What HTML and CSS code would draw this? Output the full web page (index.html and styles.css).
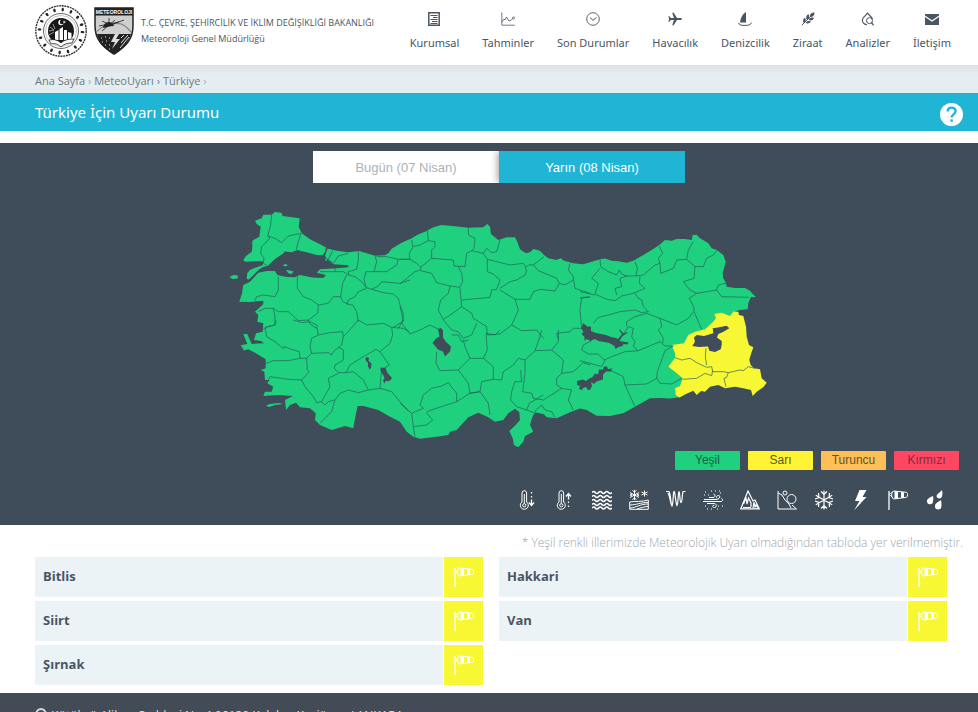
FILE: index.html
```html
<!DOCTYPE html>
<html lang="tr">
<head>
    <meta charset="UTF-8">
    <meta name="viewport" content="width=device-width, initial-scale=1.0">
    <title>MeteoUyarı - Meteoroloji Genel Müdürlüğü</title>
    <link rel="stylesheet" href="styles.css">
</head>
<body>
    <!-- shared icons -->
    <svg class="defs" width="0" height="0" aria-hidden="true">
        <symbol id="windsock" viewBox="0 0 20 20">
            <path d="M1 1v19" fill="none" stroke="currentColor" stroke-width="1.300"/>
            <path d="M1 4.500L5 1.500M1 4L5 8" fill="none" stroke="currentColor" stroke-width=".7"/>
            <path d="M5.500 1l13 1.300c1.600 1 1.600 4 0 5L5.500 9C3 7 3 3 5.500 1z" fill="none" stroke="currentColor" stroke-width="1"/>
            <path d="M6.500 1l3.500.4v7.200l-3.500.4zM13 2l3 .3v5.400l-3 .3z" fill="currentColor"/>
        </symbol>
    </svg>

    <header class="header">
        <a class="brand" href="#">
            <svg class="seal" viewBox="0 0 52 54" aria-hidden="true">
                <circle cx="26" cy="27" r="25.200" fill="#fff" stroke="#333" stroke-width="1.400" stroke-dasharray="2 .7"/>
                <circle cx="26" cy="27" r="21.500" fill="none" stroke="#222" stroke-width="2.600" stroke-dasharray="2.300 6.143"/>
                <circle cx="26" cy="27" r="21.500" fill="none" stroke="#222" stroke-width="3.800" stroke-dasharray=".9 7.543" stroke-dashoffset="-.7"/>
                <circle cx="26" cy="27" r="17.500" fill="none" stroke="#444" stroke-width=".8"/>
                <circle cx="26" cy="27" r="15.500" fill="none" stroke="#888" stroke-width=".5"/>
                <circle cx="26" cy="27" r="13" fill="#181818"/>
                <circle cx="26" cy="18.500" r="2.700" fill="#fff"/>
                <circle cx="27" cy="18" r="2.200" fill="#181818"/>
                <path d="M28 18h2.500M29.200 16.800v2.400" stroke="#fff" stroke-width=".8"/>
                <path d="M14 27l5-1M15 23l4 3M18 20l2 5M14 31l5-3" stroke="#ccc" stroke-width=".7"/>
                <path d="M20 28l3.500-2v10H20zM24.500 25l3.500-2v13h-3.500zM29 26h3v10h-3zM33 28l3.500 1v7H33z" fill="#fff"/>
                <path d="M14 36c5-1 9 0 12 3 3-3 7-4 13-4l-2 4c-5 0-8 1-11 4-3-3-6-4-10-3z" fill="#fff" stroke="#222" stroke-width=".8"/>
            </svg>
            <svg class="shield" viewBox="0 0 40 48" aria-hidden="true">
                <path d="M1 1h38v18c0 12-6 20-19 28C7 39 1 31 1 19z" fill="#cfcfcf" stroke="#222" stroke-width="1.500"/>
                <path d="M1 1h38v7.500H1z" fill="#222"/>
                <text x="20" y="7" class="shield-text" text-anchor="middle">METEOROLOJI</text>
                <path d="M2 25c6-5 11-9 17-8 6-2 12 0 18 8" fill="none" stroke="#888" stroke-width="1.300"/>
                <path d="M10 20c1-4 6-6 9-2z" fill="#222" stroke="#222" stroke-width="1.500"/>
                <path d="M5 19l20-4M8 24l13-11M8 14l11 5M15 11v7M19 17l11-4" stroke="#222" stroke-width=".8"/>
                <path d="M3 27h34c-3 9-8 15-17 20C10 42 5 36 3 27z" fill="#222"/>
                <path d="M21 27l-4 8h4l-3 7 8-10h-4l3-5z" fill="#ddd"/>
                <path d="M27 31l3-3M27 36l7-8M26 41l9-11M7 31h1M11 30h1M15 31h1M8 35h1M12 34h1M11 38h1M15 38h1M15 42h1" stroke="#ddd" stroke-width="1"/>
            </svg>
            <span class="brand-name">T.C. ÇEVRE, ŞEHİRCİLİK VE İKLİM DEĞİŞİKLİĞİ BAKANLIĞI<br>Meteoroloji Genel Müdürlüğü</span>
        </a>
        <nav class="menu">
            <a href="#">
                <svg viewBox="0 0 14 14" aria-hidden="true"><path d="M1.800.8h10.400v12.400H1.800z" fill="none" stroke="currentColor" stroke-width="1.500"/><path d="M3.500 3.500h7M6 5.500h4.500M3.500 7.500h7M5 9.500h5.500M3.500 11.500h7" stroke="currentColor" stroke-width="1"/></svg>
                <span>Kurumsal</span>
            </a>
            <a href="#">
                <svg viewBox="0 0 14 14" aria-hidden="true"><path d="M.8.500v12.700h13" fill="none" stroke="currentColor" stroke-width=".8"/><path d="M1 10l2-3 1 1 1.500-3L8 9l2.500-1L12 6" fill="none" stroke="currentColor" stroke-width=".8"/><circle cx="12.600" cy="5.800" r="1" fill="none" stroke="currentColor" stroke-width=".7"/></svg>
                <span>Tahminler</span>
            </a>
            <a href="#">
                <svg viewBox="0 0 14 14" aria-hidden="true"><circle cx="7" cy="7" r="6.300" fill="none" stroke="currentColor" stroke-width=".9"/><path d="M4 5.500l3 2.800 3.500-2.800" fill="none" stroke="currentColor" stroke-width="1"/></svg>
                <span>Son Durumlar</span>
            </a>
            <a href="#">
                <svg viewBox="0 0 14 14" aria-hidden="true"><path d="M14 7c0-.7-1-1.100-2-1.100H9L5.700.700H4.200L6 5.900H2.800L1.400 4.300H.4L1.100 7l-.7 2.700h1l1.400-1.600H6L4.200 13.300h1.500L9 8.100h3c1 0 2-.4 2-1.100z" fill="currentColor"/></svg>
                <span>Havacılık</span>
            </a>
            <a href="#">
                <svg viewBox="0 0 14 14" aria-hidden="true"><path d="M8 0v10.500H2C2.500 6 4.500 2 8 0z" fill="currentColor"/><path d="M.5 11c1 2.400 3.500 2.400 6.500 2.400s5.500-.2 6.500-2.800" fill="none" stroke="currentColor" stroke-width="1"/></svg>
                <span>Denizcilik</span>
            </a>
            <a href="#">
                <svg viewBox="0 0 14 14" aria-hidden="true"><path d="M.8 13.200L12 2" stroke="currentColor" stroke-width="1"/><path d="M13.500.5c-3 0-5 1.500-4.500 4.500 3 .2 4.500-1.500 4.500-4.500zM7.500 2C5 3.500 4.500 6 6 8 8.500 6.500 8.500 4.500 7.500 2zM4 5.500c-2 1.500-2.500 3.500-1.300 5.500C5 9.500 5.200 8 4 5.500zM13 6c-1 2.500-3.500 3-5.500 2C9 5.500 10.500 5 13 6zM10 9.500c-1 2-3.500 2.500-5.500 1.500C6 8.700 8 8.500 10 9.500z" fill="currentColor"/></svg>
                <span>Ziraat</span>
            </a>
            <a href="#">
                <svg viewBox="0 0 14 14" aria-hidden="true"><path d="M6 12.700C2.500 12.500.8 10 1.500 7.300 2 5.500 5.500 2.500 6.500 1.200 8 3 10.500 4.500 11.500 7" fill="none" stroke="currentColor" stroke-width="1.100"/><circle cx="8.500" cy="8.600" r="3" fill="none" stroke="currentColor" stroke-width="1"/><path d="M10.500 10.500l2 2.800" stroke="currentColor" stroke-width="1.300"/></svg>
                <span>Analizler</span>
            </a>
            <a href="#">
                <svg viewBox="0 0 14 14" aria-hidden="true"><path d="M0 2h14v1.500L7 8.300 0 3.500zM0 5l7 4.800L14 5v8H0z" fill="currentColor"/></svg>
                <span>İletişim</span>
            </a>
        </nav>
    </header>

    <nav class="breadcrumb">
        <a href="#">Ana Sayfa</a> <i>›</i> <a href="#">MeteoUyarı</a> › <a href="#">Türkiye</a> <i>›</i>
    </nav>

    <div class="title-bar">
        <h1>Türkiye İçin Uyarı Durumu</h1>
        <button type="button" class="help" aria-label="Yardım">
            <svg viewBox="0 0 22 22"><circle cx="11" cy="11" r="11" fill="#fff"/><path d="M7.300 8.200c0-5 7.600-5 7.600-.3 0 3-3.800 2.900-3.800 5.900" fill="none" stroke="#20b5d5" stroke-width="2.300"/><path d="M9.900 15.600h2.400v2.300H9.900z" fill="#20b5d5"/></svg>
        </button>
    </div>

    <main>
        <section class="map-panel">
            <div class="tabs">
                <button type="button" class="tab">Bugün (07 Nisan)</button>
                <button type="button" class="tab active">Yarın (08 Nisan)</button>
            </div>

            <svg class="map" viewBox="219 203 560 248" role="img" aria-label="Türkiye uyarı haritası">
                <g class="green">
                    <!-- Trakya -->
                    <path d="M326 247.500L320 244.300 310 239.300 301.700 233.300 298.700 226.700 299.700 218.300 288.300 216.700 282.700 216 281.300 212.700 275 212 271.700 214.700 263.300 214.700 261.700 218.300 255 220.700 256.700 224 260.700 226.700 259.300 236.700 252.300 240.700 252.300 247.300 251.700 251.700 246 256 243.300 260 245 261.700 258.300 261.300 263.300 261.500 262.700 265.300 255 267.700 250 270 247.300 273 246.700 279 249 279.500 258 270.500 262 267.500 268.300 265.500 275 259 283.300 253.500 284.500 251.500 291.700 252.300 297.300 250 308.300 252.700 316.700 255 322.700 255.300 325 252z"/>
                    <!-- Anadolu -->
                    <path d="M327.500 248.500L336.700 250.700 348 252.300 359.300 251 366.700 253.300 375 255.700 385 255.300 388.300 253.300 391.700 248.700 401.700 242.700 411.700 238.300 418 234.500 425 231.700 433.300 227.300 441.700 225 455 226.300 468.300 227.700 483.300 227.300 487.300 224 490 226.700 491 234 498.300 240 506.700 237.300 515 237.300 517.300 241.700 520 249.300 526 253.300 530.700 251.700 533.300 249 540 250.700 544 255 548.300 258.300 556.700 260 560.700 258.300 564 260.700 573.300 263.300 583.300 264.300 590 262.300 600 259.300 605 258.500 611.700 260.700 618.300 261.300 626.700 262.700 633.300 260.700 643.300 255 651.700 250 659.300 245 665 240 671.700 240.700 676.700 239 685 239 691.700 240 692.700 235 696.700 234.700 699.300 237.700 708.300 243.300 711.700 248.300 716.700 250 723.300 255 725.700 261.700 722.700 273.300 723.300 278.300 726 283.300 726.700 286.700 735 288 745 288 750 290.700 752.700 294 756 297 750.700 297.300 748.300 303.300 747.700 309.300 740 310 733 312 680 397.300 670 398.500 660 398 650 398.300 635 406.700 623.300 413.300 610 416 596.700 415.700 586.700 410 580 408.500 570 412.300 556.700 418.300 546.700 417.300 544 414.300 535 412.300 532.300 417.300 530 425 533.300 431.700 525 436 523.300 441.700 518.300 447.300 514 445 512.700 438.300 509.300 431 515 425.700 520 420 519.300 412.300 515 408.700 508.300 413.300 503.300 420 495 421.700 488.300 417.300 478.300 412.700 468.300 417.300 456.700 430 450 431.700 448.300 435 436.700 436.700 420 438.700 413.300 436.700 406.700 431.700 400 421.700 390 416.700 378.300 410 363.300 406 357.700 406 356 413.300 353.300 428.300 345 426 331.700 430 320 425 315 420 315.700 413.300 310 408.300 300 407.300 296 402.700 290 405 286 410 285 400 292.700 396 278.300 395 263.300 396 265 391.700 271.700 391.700 273.300 386.700 267.300 383.300 269.300 380 265 380 264.300 371.700 260.700 370 265.700 368.300 265.700 359.300 255 352.700 248.300 349.300 244 350.500 240.700 345.300 247.300 344 243.300 334 247.300 334 251.700 344 264 343.300 261 341 254 340 256 333.300 262.700 331.700 263.300 323.300 257.300 321.700 258.300 315 255 311.700 263.300 304 263.300 300.700 250 302 239.300 301.700 242 293.300 243.300 285 250 281.700 258.300 272.700 267 271 275 271 277.300 275 287 277 295 277.300 300 275 312 277.500 323.300 278 326 275 316.700 272.700 320 269.300 336.700 268.300 348.300 267.300 348.300 265.300 333.300 264.300 328.300 260 325 256z"/>
                    <!-- adalar -->
                    <path d="M229.500 277l4-2 4.500.500-.5 3-5 .5zM282.500 265l3.500-1 2 1.500-3 1zM286 270l4 .5 3.500 1-2 2.500-3-.5zM266 405.500l4-1.500 9-1 4 1-8 1-6 2zM325 258.500l1.500 0 .5 2-1 .5z"/>
                </g>

                <path class="yellow" d="M679.500 397.500L675.700 395 675 388.300 680 386 682.700 378.300 675 371.700 668.300 366.700 675 358 675 353.300 671.700 345 684 343.300 688.300 335 695 331.700 705 329.300 713.300 321.700 716 318 714.300 314 721.700 312.700 730 316 733.300 311.500 738.300 311.700 739 315 743.300 316 746 326.700 746.700 336.700 749 345 753.300 347.300 751 354 749.300 360 750.700 365 754 368.300 760 369.300 761.700 378.300 766.700 382.700 763.300 387.300 756.700 391.700 752.700 396 751 390 743.300 388.300 735 386.700 725 388.300 718.300 385 710 386.700 705 391.700 701 391 696.700 395 693.300 390.700 686 394z"/>

                <g class="water">
                    <path d="M692.300 346L695 341.700 694 337.500 696.700 335 704 336 713.300 333.300 712.700 328.300 718 327.500 726.700 325.700 729.300 328.300 723 332 718.300 334 717 337.500 721.700 341 721.700 345 720.700 349.300 715 352 709.300 350.700 708 346.500 699 347z"/>
                    <!-- Tuz -->
                    <path d="M438 329l3-1 2 2.500 0 7 3 4.500 5 4.500-1 5-5 5-2-5-5-2-2.500-3-3-3.500 3-4 4-2.500z"/>
                    <path d="M366 357l3 1-.5 3 3 2.500-.5 4.500-1.500 1.500-1.500-3.500 0-3-2.500-3zM380.500 367.500l5 .5 2 5 4.500 5-2.500 3-4 0-1 2.500-1.500-3 1.500-2-1-3-3-4.500z"/>
                    <!-- Keban, Karakaya -->
                    <path d="M583 323l5 4 1-1 2 1 0 4 5 2 5 1 5 1 5 2 5 1 2 1 4-5-3-4 1-.5 3.500 4 4-1.500 0 1-5 3-3 5 9 1.500-1 2-4-.5-1 2-4 1-3 2-1-3-5-3-5-1-6-1-4-2-4 2-4-2-2 2 0-4-3-3 2-2-2-3z"/>
                    <!-- Atatürk -->
                    <path d="M577 381l6-1.500 3 1.500 4-3 2-.5 3-4 3 1 1-5 4 0 1-3 3 0 1 2.500 4-.5-1 3-5 0-3 3 0 5-5 1.500-2 1-2 2-3-2 1 4-2 4-2 0-2-3-3 1-1 2-3-1 1-3-3-1z"/>
                </g>

                <!-- il sınırları -->
                <g class="border" transform="translate(220 200) scale(.33333)">
                    <path d="M155 44L152 75 143 108 150 114 125 140 122 160 132 175 130 190 140 196M143 108L165 115 185 128 205 108 243 100 232 135 229 150M340 190L325 178 338 152M340 190L355 168 385 160M300 215H345M385 225L385 215 410 208 415 180 415 153M345 202L345 215 370 215 385 225 405 230 425 245 438 262 432 238 438 215 462 215 470 185 465 167M470 170L500 170 535 178 530 195 515 205 500 215 462 215M535 178H568M438 262L455 268 475 258 485 245 540 250 570 240M380 225L368 250 362 290 368 305 385 312M385 300L405 290 415 275 440 265M455 268L490 278 520 282 535 295 540 315 550 340 548 365 520 382M385 300L380 312 398 315 410 335 415 365M362 290L340 290 325 310 295 315 275 300 250 290 232 265 232 230M295 315L293 340 265 360 270 372 290 385M265 360L235 362 205 335 175 335 160 325 135 325 115 335M175 230L175 270 165 290 130 285 110 290 105 302M160 325L165 350 165 375 145 380 130 388"/>
                </g>
                <g class="border" transform="translate(220 320) scale(.33333)">
                    <path d="M168 0L165 15 135 22 140 50 165 65 190 86 192 80 215 88 238 95 240 115 260 115M220 0L245 8 270 5 290 15 295 45 330 38 368 35 370 50 365 75 340 95 335 105 325 98 275 100 270 80 275 55 295 45M275 100L260 115M415 0L380 40 370 50M415 0L440 15 490 10 515 22 550 25 568 35M535 25L550 0M515 22L518 45 510 70 480 95 468 88 430 110 390 135 378 158 355 158 343 145 345 135 370 120 370 90 355 82M480 95L508 135 485 150 482 180 480 205 445 210 430 180 400 155 378 158M240 115L205 122 160 122 138 130M260 115L262 150 268 155 245 180 205 178 150 170 145 180M245 180L255 200 280 230 290 248 305 245 330 200 325 175 355 160M305 245L315 255 325 245 345 240 360 220 385 210 415 218 445 210M480 205L515 215 540 245 568 275M345 240L335 275 315 295 300 310"/>
                </g>
                <g class="border" transform="translate(400 210) scale(.33333)">
                    <path d="M35 90L38 110 60 105 85 92 82 62M85 92L105 95 105 110 95 120 95 145 62 172 62 180 45 185 0 222M38 112L28 130 30 148 0 148M30 148L50 160 62 172M95 145L160 150 162 168 195 170 200 130 215 122M205 53L205 75 225 85 222 115 215 122 250 130 262 148M250 130L260 115 275 128 290 125 300 90M62 182L95 190 110 218 150 228 180 232 188 215 185 190 175 170M262 148L330 165 370 160 378 172 385 165 400 165 432 140M262 150L262 185 280 192 300 210 290 238 275 240 270 262 240 265 185 270M300 235L330 215 350 210 375 195 380 182 375 172M400 165L415 182 470 205 478 220 465 243 420 238 400 245 390 268 345 268 300 240M510 160L505 180 520 200 520 210 495 225 478 220M520 205L525 235 570 250M150 228L145 250 122 270 115 300 130 330 155 360 175 365 190 385 215 375 230 340M180 235L185 290 215 310 220 325 260 350 262 375 300 372 335 345M185 290L155 312 130 328M345 268L355 300 335 345 365 362 410 360 430 385M545 262L540 300 545 355 520 355 510 365 470 370 475 388M545 262H570M0 290L10 330 5 340 30 372 60 360 90 345 120 360"/>
                </g>
                <g class="border" transform="translate(400 330) scale(.33333)">
                    <path d="M155 15L175 15 185 35 205 30M190 30L195 50 210 85M110 65L108 100 120 122 175 120 210 85 250 85 262 60 258 10 285 15 300 0M250 85L280 110 280 148 245 155 240 185 210 190 205 160 175 120M280 148L305 150 310 125 340 105 355 85 375 90 405 62 455 60 490 90 485 130 470 145 470 165 485 175M405 62L420 20 425 0M455 60L475 35 475 0M485 130L520 125 550 98 570 105M375 90L375 130 368 185 395 190 400 205 430 210 485 175 515 180 505 210 520 240M362 120L365 155 345 155 335 185 332 210 350 230 380 240 388 220 430 195M380 240L400 248 425 225 435 240 455 245 465 262M240 185L265 220 270 255M240 185L210 190 170 215 170 190 150 165 145 158 125 168 95 175 70 195 60 225 70 235 35 250 0 220M35 250L40 290 45 320M40 290L80 285 98 270 80 250 85 243 170 215"/>
                </g>
                <g class="border" transform="translate(580 220) scale(.33333)">
                    <path d="M60 118L62 140 85 155 110 165 118 150 125 162 140 168 168 168 172 145 165 125M60 145L35 175 55 190 45 222 80 238 105 242 125 228 160 220 195 205 178 190 180 170M110 225L105 205 125 200 120 175 140 168M168 168L190 165 225 135 240 130 235 115 248 100 238 78M165 220L175 235 185 240 190 260 205 275 185 278 165 270 120 275 85 285 55 292 40 310M240 130L242 160 255 155 280 145 290 120 320 118 325 90 340 65M320 118L345 140 370 140 380 115 400 105 410 92M345 140L342 175 310 185 330 210 350 220 410 210 415 195 438 190M350 220L328 235 342 262 342 275 365 328M410 210L425 230 505 232M0 215L45 225M0 235L30 230"/>
                </g>
                <g class="border" transform="translate(580 310) scale(.33333)">
                    <path d="M10 105L5 120 25 132 55 132 72 150 100 138 135 125 175 122 240 95 255 108 280 108M10 105L35 92M130 72L145 50 160 55 155 80 165 95 160 110 175 122M140 50L140 35 165 20 200 10 240 25 245 50 235 60 250 85 248 100M240 25L290 45 325 25 340 5M75 150L65 170 0 152M85 178L130 200 135 225 165 290M135 225L200 222 230 205 232 185 255 122 280 108M230 205L240 220 275 222 305 205"/>
                    <path d="M378 115L376 140 380 165M285 143L305 150 330 145 350 158 380 172 395 170 398 185 430 185 445 188 480 180 490 182 505 170 525 175M308 208L350 205 375 190 395 197 398 182M445 188L440 202 432 205 438 230"/>
                </g>
            </svg>

            <ul class="legend">
                <li class="level-green">Yeşil</li>
                <li class="level-yellow">Sarı</li>
                <li class="level-orange">Turuncu</li>
                <li class="level-red">Kırmızı</li>
            </ul>

            <ul class="hazards">
                <li><svg viewBox="0 0 20 20"><path d="M4 12V3a2.300 2.300 0 0 1 4.600 0v9a4 4 0 1 1-4.600 0z"/><circle cx="6.300" cy="15.300" r="1.600"/><path d="M6.300 4v9.500"/><path stroke-width="1.300" d="M13.500 2v1.500M13.500 6v1.500M13.500 9.500V15M11 12.500l2.500 3 2.500-3"/></svg></li>
                <li><svg viewBox="0 0 20 20"><path d="M4 12V3a2.300 2.300 0 0 1 4.600 0v9a4 4 0 1 1-4.600 0z"/><circle cx="6.300" cy="15.300" r="1.600"/><path d="M6.300 4v9.500"/><path stroke-width="1.300" d="M13.500 17v-1.500M13.500 13v-1.500M13.500 9.500V4M11 6.500l2.500-3 2.500 3"/></svg></li>
                <li><svg viewBox="0 0 20 20"><path stroke-width="1.500" d="M0 2.500q1.700-2 3.300 0t3.300 0 3.300 0 3.300 0 3.300 0 3.300 0M0 6.500q1.700-2 3.300 0t3.300 0 3.300 0 3.300 0 3.300 0 3.300 0M0 10.500q1.700-2 3.300 0t3.300 0 3.300 0 3.300 0 3.300 0 3.300 0M0 14.500q1.700-2 3.300 0t3.300 0 3.300 0 3.300 0 3.300 0 3.300 0M0 18q1.700-2 3.300 0t3.300 0 3.300 0 3.300 0 3.300 0 3.300 0"/></svg></li>
                <li><svg viewBox="0 0 20 20"><path d="M5.500 0v10M1 2.500l9 5M1 7.500l9-5M3.500.5l2 1.500 2-1.500M3.500 9.500l2-1.500 2 1.500M1 4l2 1-2 1M10 4L8 5l2 1M15.500.500v6M12.500 2l6 3M12.500 5l6-3"/><path d="M.7 19.300V12c6-1 12 0 18.600-2v9.300zM1 15c6 0 10-2.500 18-2.500M1 18c7-.5 10-4 18-4M8 19c4-1 7-2.500 11-2.500"/></svg></li>
                <li><svg viewBox="0 0 20 20"><path stroke-width="1.200" d="M0 1.500h3M3 1.500c2 4 1.500 12 3 14.500 1.500-3 1-13.500 2-14.500s1.500 11 3 14c1.500-2 1-14 2-14s.5 10 2 11c1.500-1 1-8 2-11h2.500M2 3c2 3 2 10 4 13"/></svg></li>
                <li><svg viewBox="0 0 20 20"><path d="M1 9.500h12c4 0 5-4 2.500-4S13 8 14 8M0 11.500h18c2 0 2-3 .5-3M4 13.500h7c3 0 3 4 .5 4S9.500 15 11 15M6 7.500h4c3 0 2-4 .5-3.500"/><path stroke-dasharray="1 3" d="M2 2h4M8 1h11M1 5h5M17 3h3M2 16h4M4 19h6M15 16h5M14 19h4"/></svg></li>
                <li><svg viewBox="0 0 20 20"><path stroke-width="1.200" d="M.8 18.800L8 1l5 10 2-1 4.200 8.800zM3.500 14L6 8l1 6 1.500-6 2.500 5v4M13 18l1-6 1 5 1-2 2 3M3 17.500h8"/></svg></li>
                <li><svg viewBox="0 0 20 20"><path d="M1 1v18h18.500L15 15M1 3l4 2 3 5 4 4 2 4"/><circle cx="8" cy="3" r="2"/><circle cx="14.500" cy="9" r="4.500"/></svg></li>
                <li><svg viewBox="0 0 20 20"><path stroke-width="1.200" d="M10 .5v19M1.800 5.300l16.400 9.400M1.800 14.700l16.400-9.400M7 1.500l3 3 3-3M7 18.500l3-3 3 3M1 9l4-1.500L4.500 3M19 9l-4-1.500.5-4.500M1 11l4 1.500-.5 4.500M19 11l-4 1.500.5 4.500"/></svg></li>
                <li><svg viewBox="0 0 20 20"><path class="solid" d="M8.500 0h7l-4 7h4L3 20.500 8.500 11H4z"/></svg></li>
                <li><svg class="sock"><use href="#windsock"/></svg></li>
                <li><svg viewBox="0 0 20 20"><path class="solid" d="M17 0c-2 2.500-5.500 4-5.500 6.500a2.900 2.900 0 0 0 5.500 0C17.500 4.500 17.500 2 17 0zM8 6c-3 1.500-6 2.500-6 5a3 3 0 0 0 6 .5C8.300 10 8.500 8 8 6zM16 10c-3 2-6 3.500-6 6a3.200 3.200 0 0 0 6.400.5c.2-2 .1-4-.4-6.500z"/></svg></li>
            </ul>
        </section>

        <p class="note">* Yeşil renkli illerimizde Meteorolojik Uyarı olmadığından tabloda yer verilmemiştir.</p>

        <ul class="cities">
            <li><span>Bitlis</span><b><svg><use href="#windsock"/></svg></b></li>
            <li><span>Hakkari</span><b><svg><use href="#windsock"/></svg></b></li>
            <li><span>Siirt</span><b><svg><use href="#windsock"/></svg></b></li>
            <li><span>Van</span><b><svg><use href="#windsock"/></svg></b></li>
            <li><span>Şırnak</span><b><svg><use href="#windsock"/></svg></b></li>
        </ul>
    </main>

    <footer class="footer">
        <svg viewBox="0 0 12 16" aria-hidden="true"><path d="M6 15C4 11 1.500 8.500 1.500 5.500a4.500 4.500 0 0 1 9 0C10.500 8.500 8 11 6 15z" fill="none" stroke="currentColor" stroke-width="2"/></svg>
        <span>Kütükçü Alibey Caddesi No:4 06120 Kalaba, Keçiören / ANKARA</span>
    </footer>
</body>
</html>
```
FILE: styles.css
```css
* {
    box-sizing: border-box;
}
body {
    font-family: 'Open Sans', sans-serif;
    font-size: 12px;
    color: #4a5564;
    background: #fff;
    margin: 0;
}
a {
    color: inherit;
    text-decoration: none;
}
ul {
    list-style: none;
    margin: 0;
    padding: 0;
}
button {
    border: none;
    padding: 0;
    cursor: pointer;
}
.defs {
    display: block;
}
.header {
    display: flex;
    justify-content: space-between;
    height: 65px;
    padding: 0 27px 0 35px;
    background: #fff;
}
.brand {
    display: flex;
    align-items: flex-start;
    padding-top: 4px;
}
.seal {
    width: 52px;
    height: 54px;
}
.shield {
    width: 40px;
    height: 48px;
    margin: 3px 7px 0;
}
.shield-text {
    font: bold 5px 'Liberation Sans', sans-serif;
    fill: #fff;
}
.brand-name {
    font-size: 9px;
    line-height: 16px;
    padding-top: 11px;
    white-space: nowrap;
}
.menu {
    display: flex;
    gap: 23px;
    padding-top: 12px;
}
.menu a {
    display: flex;
    flex-direction: column;
    align-items: center;
    gap: 9px;
    font-family: 'Noto Sans', sans-serif;
    font-size: 11px;
    line-height: 16px;
    white-space: nowrap;
}
.menu svg {
    width: 14px;
    height: 14px;
}
.breadcrumb {
    height: 28px;
    padding: 0 35px;
    line-height: 32px;
    font-size: 11px;
    color: #6b7a84;
    background: linear-gradient(#dbe3e8, #e6edf1 10px);
}
.breadcrumb i {
    font-style: normal;
    color: #9aa8b0;
}
.title-bar {
    display: flex;
    align-items: center;
    justify-content: space-between;
    height: 38px;
    padding: 0 15px 0 35px;
    background: #20b5d5;
    color: #fff;
}
h1 {
    margin: 0;
    font-family: 'Noto Sans', sans-serif;
    font-size: 15px;
    font-weight: normal;
}
.help {
    width: 23px;
    height: 23px;
    margin-top: 4px;
    background: none;
}
.help svg {
    display: block;
}
.map-panel {
    margin-top: 12px;
    padding: 8px 15px 15px 35px;
    background: #3f4c59;
}
.tabs {
    display: flex;
    justify-content: center;
}
.tab {
    width: 186px;
    height: 32px;
    font: 13px 'Liberation Sans', sans-serif;
    color: #a9b3b8;
    background: #fff;
}
.tab.active {
    color: #fff;
    background: #20b5d5;
    box-shadow: 0 0 8px rgba(0, 0, 0, 0.5);
    clip-path: inset(0 0 0 -8px);
}
.map {
    display: block;
    width: 560px;
    max-width: 100%;
    margin: 20px auto 0;
}
.green {
    fill: #1fd07f;
}
.yellow {
    fill: #f7f733;
}
.water {
    fill: #3f4c59;
}
.border {
    fill: none;
    stroke: #265b58;
    stroke-width: 2;
    stroke-linejoin: round;
}
.legend {
    display: flex;
    justify-content: flex-end;
    gap: 8px;
    padding-right: 4px;
}
.legend li {
    width: 65px;
    height: 19px;
    border-radius: 1px;
    font: 12px/19px 'Liberation Sans', sans-serif;
    text-align: center;
}
.level-green {
    background: #1fd07f;
    color: #17613f;
}
.level-yellow {
    background: #fff333;
    color: #5c5a26;
}
.level-orange {
    background: #ffbf57;
    color: #66512f;
}
.level-red {
    background: #ff4763;
    color: #822b40;
}
.hazards {
    display: flex;
    justify-content: flex-end;
    gap: 17px;
    padding: 20px 18px 0 0;
    color: #fff;
}
.hazards svg {
    display: block;
    width: 20px;
    height: 20px;
    fill: none;
    stroke: #fff;
}
.hazards .sock {
    stroke: none;
}
.hazards .solid {
    fill: #fff;
    stroke: none;
}
.note {
    margin: 0;
    padding: 8px 15px 4px;
    line-height: 20px;
    font-size: 12px;
    font-weight: 300;
    text-align: right;
    color: #9ba6af;
}
.cities {
    display: grid;
    grid-template-columns: 1fr 1fr;
    gap: 4px 16px;
    padding: 0 31px 8px 35px;
}
.cities li {
    display: flex;
    gap: 1px;
    height: 40px;
}
.cities span {
    flex: 1;
    padding-left: 8px;
    font-size: 13px;
    font-weight: bold;
    line-height: 38px;
    background: #ebf3f7;
}
.cities b {
    display: flex;
    align-items: center;
    justify-content: center;
    width: 39px;
    background: #f7f733;
    color: #fff;
}
.cities svg {
    width: 20px;
    height: 20px;
}
.footer {
    display: flex;
    gap: 4px;
    padding: 13px 35px 24px;
    font-family: 'Noto Sans', sans-serif;
    font-size: 12px;
    line-height: 20px;
    color: #d5dade;
    background: #434b57;
}
.footer svg {
    width: 12px;
    height: 16px;
    margin-top: 2px;
}
```
